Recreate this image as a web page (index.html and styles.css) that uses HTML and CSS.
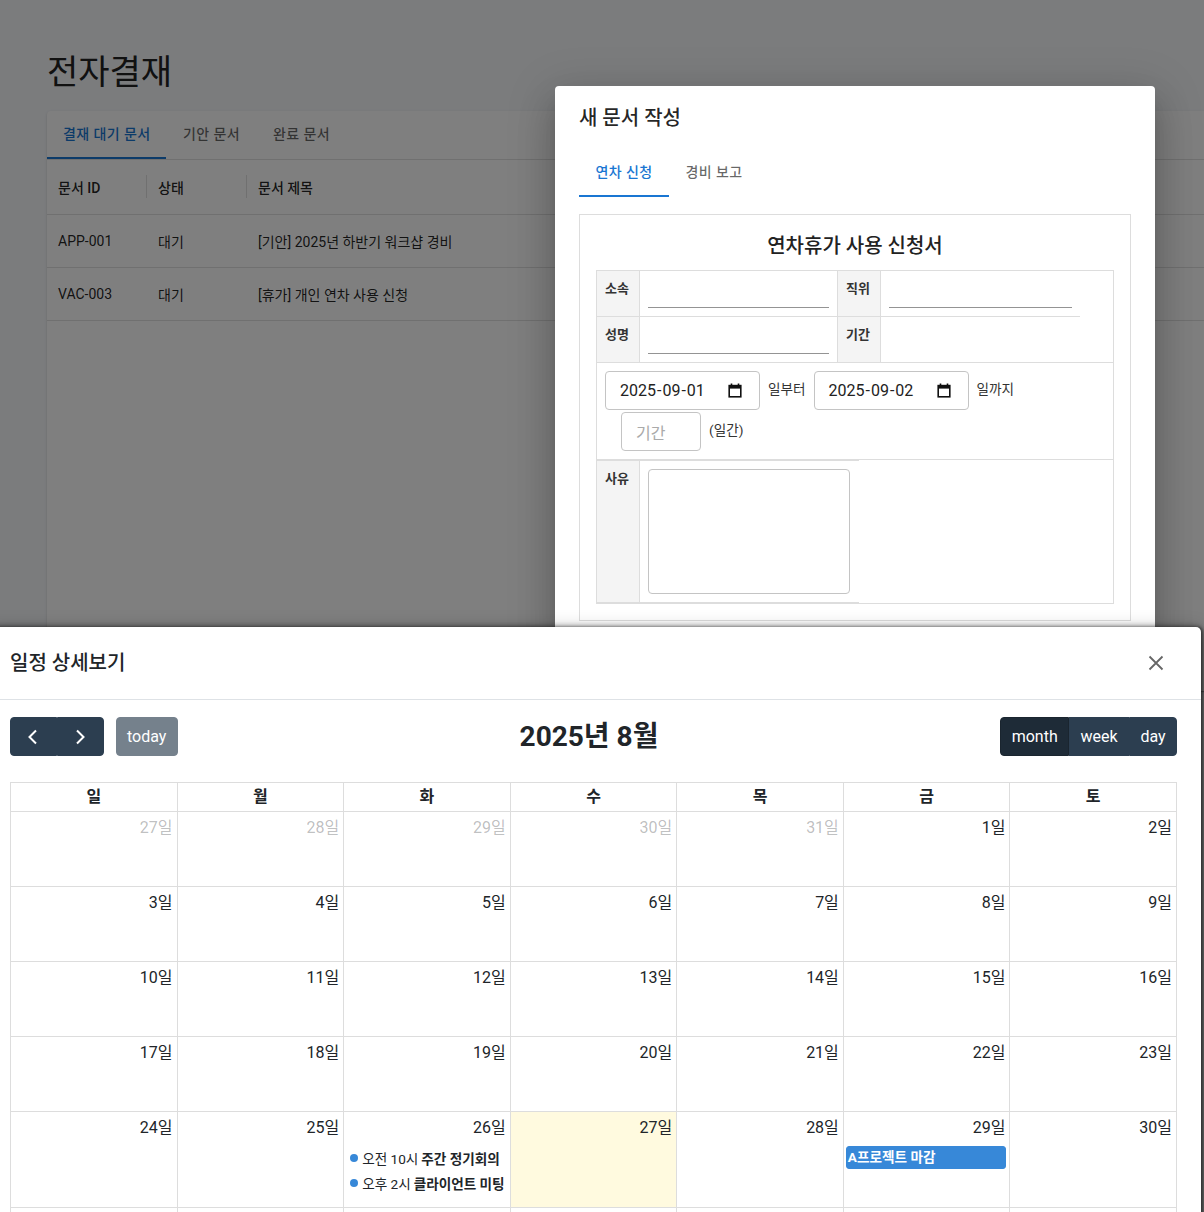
FILE: index.html
```html
<!DOCTYPE html>
<html lang="ko">
<head>
<meta charset="utf-8">
<title>전자결재</title>
<link rel="stylesheet" href="styles.css">
</head>
<body>
<div class="page">
  <h1 class="page-title">전자결재</h1>
  <div class="card">
    <div class="tabs">
      <div class="tab active">결재 대기 문서</div>
      <div class="tab">기안 문서</div>
      <div class="tab">완료 문서</div>
    </div>
    <div class="grid">
      <div class="grid-row grid-head">
        <div class="cell c1 sep">문서 ID</div>
        <div class="cell c2 sep">상태</div>
        <div class="cell c3">문서 제목</div>
      </div>
      <div class="grid-row">
        <div class="cell c1">APP-001</div>
        <div class="cell c2">대기</div>
        <div class="cell c3">[기안] 2025년 하반기 워크샵 경비</div>
      </div>
      <div class="grid-row">
        <div class="cell c1">VAC-003</div>
        <div class="cell c2">대기</div>
        <div class="cell c3">[휴가] 개인 연차 사용 신청</div>
      </div>
    </div>
  </div>
</div>

<div class="backdrop"></div>

<div class="doc-dialog">
  <h2 class="dlg-title">새 문서 작성</h2>
  <div class="dlg-tabs">
    <div class="tab active">연차 신청</div>
    <div class="tab">경비 보고</div>
  </div>
  <div class="form-box">
    <h3 class="form-title">연차휴가 사용 신청서</h3>
    <div class="ftable">
      <div class="frow frow-a">
        <div class="fth">소속</div>
        <div class="ftd ftd1"><div class="uline"></div></div>
        <div class="fth">직위</div>
        <div class="ftd ftd2"><div class="uline"></div></div>
      </div>
      <div class="frow frow-b">
        <div class="fth">성명</div>
        <div class="ftd ftd1"><div class="uline"></div></div>
        <div class="fth">기간</div>
        <div class="ftd ftd2"></div>
      </div>
      <div class="frow-c">
        <div class="datebox"><span class="dval"><span>2025</span>-<span>09</span>-<span>01</span></span>
          <svg class="calicon" width="14" height="15" viewBox="0 0 14 15"><path d="M3.5 0.5v2.5M10.5 0.5v2.5" stroke="#111" stroke-width="1.6"/><rect x="1.2" y="2.6" width="11.6" height="11.2" fill="none" stroke="#111" stroke-width="1.6"/><rect x="1.2" y="2.6" width="11.6" height="3" fill="#111"/></svg>
        </div>
        <span class="flabel">일부터</span>
        <div class="datebox"><span class="dval"><span>2025</span>-<span>09</span>-<span>02</span></span>
          <svg class="calicon" width="14" height="15" viewBox="0 0 14 15"><path d="M3.5 0.5v2.5M10.5 0.5v2.5" stroke="#111" stroke-width="1.6"/><rect x="1.2" y="2.6" width="11.6" height="11.2" fill="none" stroke="#111" stroke-width="1.6"/><rect x="1.2" y="2.6" width="11.6" height="3" fill="#111"/></svg>
        </div>
        <span class="flabel">일까지</span>
        <div class="daysbox">기간</div>
        <span class="flabel">(일간)</span>
      </div>
      <div class="frow frow-d">
        <div class="fth">사유</div>
        <div class="ftd"><textarea class="reason"></textarea></div>
      </div>
    </div>
  </div>
</div>

<div class="cal-dialog">
  <div class="cal-head">
    <h2 class="cal-title">일정 상세보기</h2>
    <svg class="close" width="16" height="16" viewBox="0 0 16 16"><path d="M1.5 1.5L14.5 14.5M14.5 1.5L1.5 14.5" stroke="#666" stroke-width="1.8"/></svg>
  </div>
  <div class="cal-body">
    <div class="toolbar">
      <div class="tb-left">
        <div class="btn-group">
          <div class="fc-btn icon-btn"><svg width="24" height="24" viewBox="0 0 24 24"><path d="M15 5.5L8.5 12L15 18.5" fill="none" stroke="#fff" stroke-width="2"/></svg></div>
          <div class="fc-btn icon-btn"><svg width="24" height="24" viewBox="0 0 24 24"><path d="M9 5.5L15.5 12L9 18.5" fill="none" stroke="#fff" stroke-width="2"/></svg></div>
        </div>
        <div class="fc-btn today">today</div>
      </div>
      <h2 class="cal-month">2025년 8월</h2>
      <div class="btn-group">
        <div class="fc-btn active">month</div>
        <div class="fc-btn">week</div>
        <div class="fc-btn">day</div>
      </div>
    </div>
    <div class="cal-grid">
      <div class="dh">일</div><div class="dh">월</div><div class="dh">화</div><div class="dh">수</div><div class="dh">목</div><div class="dh">금</div><div class="dh">토</div>

      <div class="day other"><span class="num">27일</span></div>
      <div class="day other"><span class="num">28일</span></div>
      <div class="day other"><span class="num">29일</span></div>
      <div class="day other"><span class="num">30일</span></div>
      <div class="day other"><span class="num">31일</span></div>
      <div class="day"><span class="num">1일</span></div>
      <div class="day"><span class="num">2일</span></div>

      <div class="day"><span class="num">3일</span></div>
      <div class="day"><span class="num">4일</span></div>
      <div class="day"><span class="num">5일</span></div>
      <div class="day"><span class="num">6일</span></div>
      <div class="day"><span class="num">7일</span></div>
      <div class="day"><span class="num">8일</span></div>
      <div class="day"><span class="num">9일</span></div>

      <div class="day"><span class="num">10일</span></div>
      <div class="day"><span class="num">11일</span></div>
      <div class="day"><span class="num">12일</span></div>
      <div class="day"><span class="num">13일</span></div>
      <div class="day"><span class="num">14일</span></div>
      <div class="day"><span class="num">15일</span></div>
      <div class="day"><span class="num">16일</span></div>

      <div class="day"><span class="num">17일</span></div>
      <div class="day"><span class="num">18일</span></div>
      <div class="day"><span class="num">19일</span></div>
      <div class="day"><span class="num">20일</span></div>
      <div class="day"><span class="num">21일</span></div>
      <div class="day"><span class="num">22일</span></div>
      <div class="day"><span class="num">23일</span></div>

      <div class="day tall"><span class="num">24일</span></div>
      <div class="day tall"><span class="num">25일</span></div>
      <div class="day tall"><span class="num">26일</span>
        <div class="dot-ev"><span class="dot"></span><span class="ev-time">오전 10시</span><b>주간 정기회의</b></div>
        <div class="dot-ev"><span class="dot"></span><span class="ev-time">오후 2시</span><b>클라이언트 미팅</b></div>
      </div>
      <div class="day tall today-cell"><span class="num">27일</span></div>
      <div class="day tall"><span class="num">28일</span></div>
      <div class="day tall"><span class="num">29일</span>
        <div class="block-ev">A프로젝트 마감</div>
      </div>
      <div class="day tall"><span class="num">30일</span></div>

      <div class="day"></div>
      <div class="day"></div>
      <div class="day"></div>
      <div class="day"></div>
      <div class="day"></div>
      <div class="day"></div>
      <div class="day"></div>
    </div>
  </div>
</div>
</body>
</html>
```
FILE: styles.css
```css
* { box-sizing: border-box; }
html, body { margin: 0; padding: 0; }
body {
  width: 1204px;
  height: 1212px;
  overflow: hidden;
  position: relative;
  background: #f6f8fb;
  font-family: Roboto, "Noto Sans CJK KR", sans-serif;
  color: rgba(0, 0, 0, 0.87);
}

/* background page */
.page { padding: 52px 0 0 47px; }
.page-title {
  margin: 0 0 19px;
  font-size: 34px;
  font-weight: 400;
  line-height: 40px;
  color: #222;
}
.card {
  width: 1300px;
  height: 580px;
  background: #fff;
  border-radius: 4px;
  box-shadow: 0 2px 1px -1px rgba(0,0,0,.2), 0 1px 1px 0 rgba(0,0,0,.14), 0 1px 3px 0 rgba(0,0,0,.12);
  overflow: hidden;
}
.tabs { display: flex; height: 49px; border-bottom: 1px solid #e0e0e0; }
.tab {
  position: relative;
  min-width: 90px;
  padding: 0 16px 4px;
  display: flex;
  align-items: center;
  justify-content: center;
  font-size: 14px;
  font-weight: 500;
  letter-spacing: 0.4px;
  color: rgba(0, 0, 0, 0.6);
}
.tab.active { color: #1976d2; }
.tab.active::after {
  content: "";
  position: absolute;
  left: 0; right: 0; bottom: 0;
  height: 2px;
  background: #1976d2;
}
.grid-row {
  display: flex;
  align-items: center;
  height: 53px;
  border-bottom: 1px solid #e0e0e0;
  font-size: 14px;
}
.grid-head { height: 55px; font-weight: 500; }
.cell { position: relative; padding: 0 10px 0 11px; height: 100%; display: flex; align-items: center; }
.c1, .c2 { width: 100px; }
.c3 { flex: 1; }
.grid-head .sep::after {
  content: "";
  position: absolute;
  right: 0;
  top: 15px;
  height: 23px;
  width: 1px;
  background: #e0e0e0;
}

.backdrop {
  position: absolute;
  inset: 0;
  background: rgba(0, 0, 0, 0.5);
}

/* new document dialog */
.doc-dialog {
  position: absolute;
  left: 555px;
  top: 86px;
  width: 600px;
  background: #fff;
  border-radius: 4px;
  padding-bottom: 24px;
  box-shadow: 0 11px 15px -7px rgba(0,0,0,.2), 0 24px 38px 3px rgba(0,0,0,.14), 0 9px 46px 8px rgba(0,0,0,.12);
}
.dlg-title {
  margin: 0;
  padding: 16px 24px 15px;
  font-size: 20px;
  font-weight: 500;
  line-height: 32px;
  color: rgba(0, 0, 0, 0.87);
}
.dlg-tabs { display: flex; height: 48px; margin: 0 24px; }
.form-box {
  margin: 17px 24px 0;
  border: 1px solid #ddd;
  padding: 16px;
}
.form-title {
  margin: 0 0 8px;
  text-align: center;
  font-size: 20px;
  font-weight: 500;
  line-height: 31px;
  color: #222;
}
.ftable { border: 1px solid #ddd; }
.frow { display: flex; }
.frow-a { width: 483px; border-bottom: 1px solid #ddd; }
.frow-b { border-bottom: 1px solid #ddd; }
.fth {
  width: 43px;
  flex: none;
  background: #f4f4f4;
  border-right: 1px solid #ddd;
  padding: 8px 0 0 8px;
  font-size: 13px;
  font-weight: 700;
  line-height: 19px;
  color: #333;
}
.ftd { padding: 8px; }
.ftd1 { width: 198px; border-right: 1px solid #ddd; }
.ftd2 { width: 199px; }
.uline { height: 29px; border-bottom: 1px solid #949494; }
.frow-c {
  display: flex;
  flex-wrap: wrap;
  align-items: center;
  gap: 2px 8px;
  padding: 8px;
  border-bottom: 1px solid #ddd;
}
.datebox {
  width: 155px;
  height: 39px;
  border: 1px solid #c4c4c4;
  border-radius: 4px;
  padding: 0 17px 0 14px;
  display: flex;
  align-items: center;
  justify-content: space-between;
  font-size: 16px;
  color: #222;
}
.dval span { padding: 0 1px; }
.dval span:first-child { padding-left: 0; }
.calicon { display: block; }
.flabel { font-size: 13.6px; line-height: 18px; margin-bottom: 4px; color: #333; }
.daysbox {
  width: 80px;
  height: 39px;
  margin-left: 16px;
  border: 1px solid #c4c4c4;
  border-radius: 4px;
  padding: 0 14px;
  display: flex;
  align-items: center;
  font-size: 16px;
  color: #aaa;
}
.frow-d { width: 262px; border-top: 1px solid #ddd; border-bottom: 1px solid #ddd; }
.frow-d .ftd { flex: 1; }
.reason {
  display: block;
  width: 202px;
  height: 125px;
  border: 1px solid #c4c4c4;
  border-radius: 4px;
  resize: none;
  margin: 0;
}

/* calendar dialog */
.cal-dialog {
  position: absolute;
  left: -14px;
  top: 627px;
  width: 1215px;
  height: 700px;
  background: #fff;
  border-radius: 5px;
  box-shadow: 2px 0 3px rgba(0, 0, 0, 0.4), 0 0 6px rgba(0, 0, 0, 0.45), 0 4px 20px rgba(0, 0, 0, 0.3);
  color: #212529;
}
.cal-head {
  height: 73px;
  border-bottom: 1px solid #dee2e6;
  display: flex;
  align-items: center;
  justify-content: space-between;
  padding: 0 37px 0 24px;
}
.cal-title {
  margin: 0;
  font-size: 20px;
  font-weight: 500;
  line-height: 30px;
  color: #212529;
}
.close { display: block; }
.cal-body { padding: 17px 24px 0; }
.toolbar {
  display: flex;
  align-items: center;
  justify-content: space-between;
  margin-bottom: 26px;
}
.tb-left { display: flex; align-items: center; }
.btn-group { display: flex; }
.fc-btn {
  background: #2c3e50;
  border: 1px solid #2c3e50;
  color: #fff;
  font-size: 16px;
  line-height: 24px;
  padding: 6.4px 10.4px;
  height: 39px;
  display: flex;
  align-items: center;
}
.btn-group .fc-btn:first-child { border-radius: 4px 0 0 4px; }
.btn-group .fc-btn:last-child { border-radius: 0 4px 4px 0; }
.fc-btn.active { background: #1e2b37; border-color: #1a252f; }
.icon-btn svg { display: block; }
.today { margin-left: 12px; border-radius: 4px; opacity: 0.65; }
.cal-month {
  margin: 0;
  font-size: 28px;
  font-weight: 700;
  line-height: 34px;
  color: #212529;
}
.cal-grid {
  display: grid;
  grid-template-columns: repeat(7, 1fr);
  border-top: 1px solid #ddd;
  border-left: 1px solid #ddd;
}
.dh {
  height: 29px;
  border-right: 1px solid #ddd;
  border-bottom: 1px solid #ddd;
  text-align: center;
  font-size: 16px;
  font-weight: 700;
  line-height: 28px;
}
.day {
  height: 75px;
  border-right: 1px solid #ddd;
  border-bottom: 1px solid #ddd;
  display: flex;
  flex-direction: column;
  overflow: hidden;
}
.day.tall { height: 96px; }
.num {
  align-self: flex-end;
  padding: 4px;
  font-size: 16px;
  line-height: 24px;
}
.other .num { color: rgba(33, 37, 41, 0.3); }
.today-cell { background: #fffadf; }
.dot-ev {
  display: flex;
  align-items: center;
  height: 23px;
  margin: 2px 2px 0;
  font-size: 13.6px;
  white-space: nowrap;
  overflow: hidden;
}
.dot {
  flex: none;
  width: 8px;
  height: 8px;
  border-radius: 50%;
  background: #3788d8;
  margin: 0 4px;
}
.ev-time { margin-right: 3px; }
.dot-ev b { font-weight: 700; }
.block-ev {
  height: 23px;
  margin: 2px 3px 0 2px;
  background: #3788d8;
  border: 1px solid #3788d8;
  border-radius: 3px;
  color: #fff;
  font-size: 13.6px;
  font-weight: 700;
  line-height: 21px;
  padding: 0 1px;
  white-space: nowrap;
  overflow: hidden;
}
```
